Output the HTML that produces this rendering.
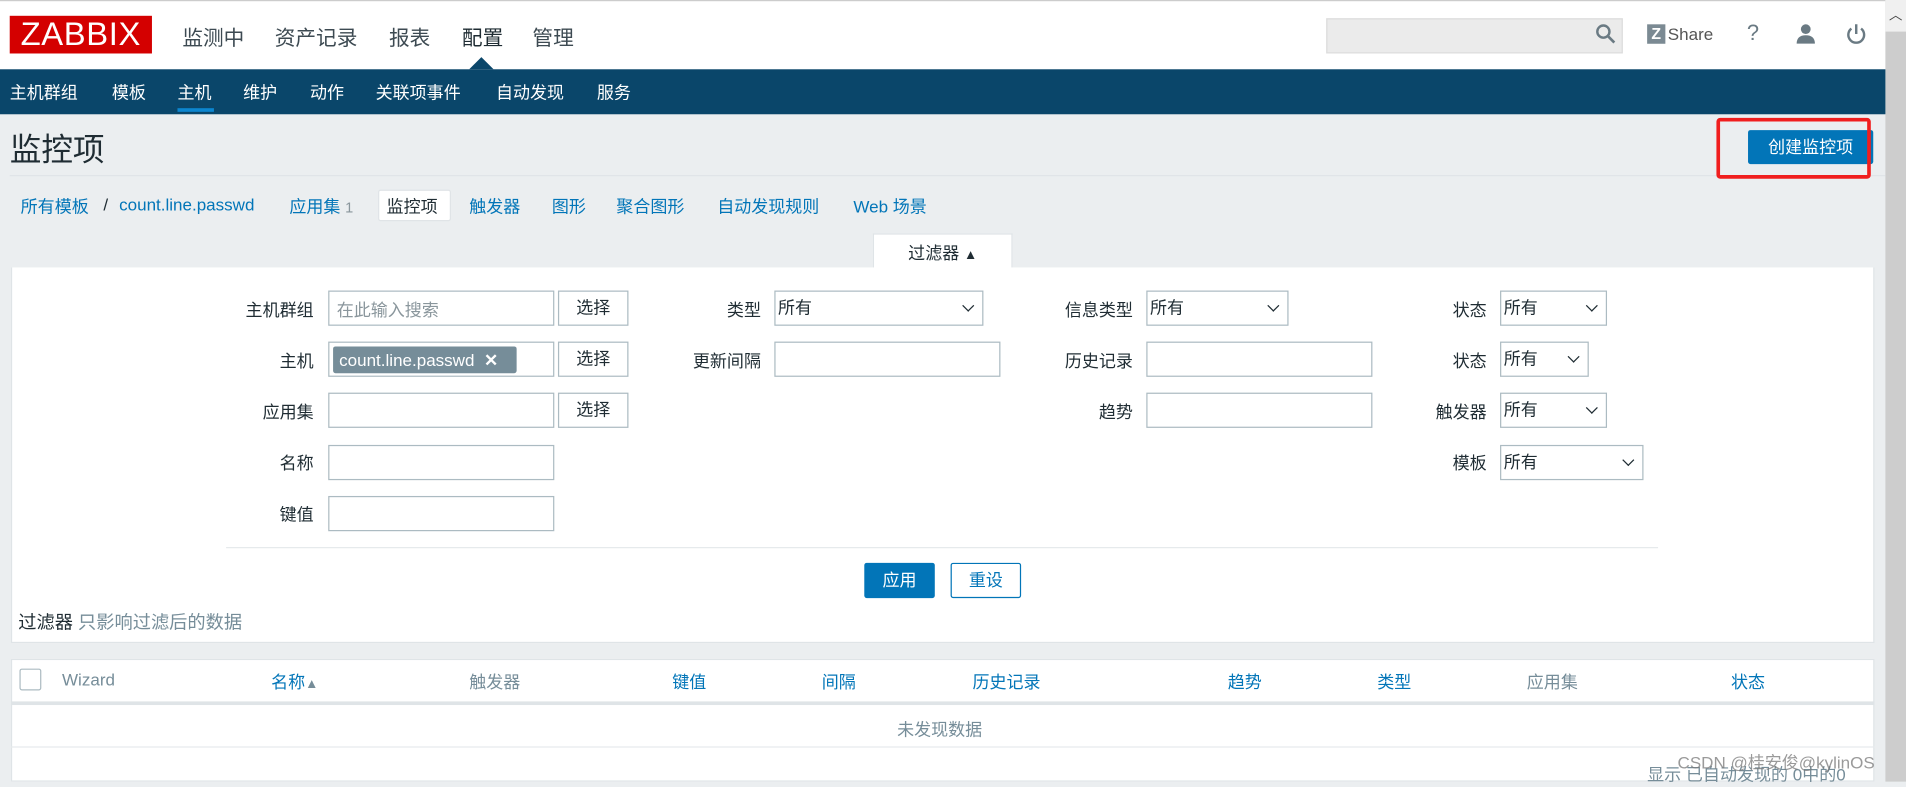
<!DOCTYPE html>
<html><head><meta charset="utf-8"><style>
*{margin:0;padding:0;box-sizing:border-box}
html,body{width:1906px;height:782px;overflow:hidden;background:#ebeef0}
#w{position:absolute;left:0;top:0;width:1568px;height:643px;transform:scale(1.2156);transform-origin:0 0;font-family:"Liberation Sans","Noto Sans CJK SC",sans-serif;font-size:14px;color:#1f2c33;background:#ebeef0}
.a{position:absolute;white-space:nowrap}
.hdr{left:0;top:0;width:1551px;height:57px;background:#fff;border-top:1px solid #ccc}
.nav{left:0;top:57px;width:1551px;height:37px;background:#0a466a}
.nav span{position:absolute;top:9px;color:#fff;font-size:14px}
.menu{top:17px;font-size:17px;color:#3d4a52}
.blue{color:#0275b8}
.inp{position:absolute;height:29px;background:#fff;border:1px solid #acbbc2}
.btn{position:absolute;height:29px;width:58px;background:#fff;border:1px solid #acbbc2;text-align:center;line-height:27px}
.lbl{position:absolute;text-align:right;width:120px}
.sel{position:absolute;height:29px;background:#fff;border:1px solid #acbbc2;padding-left:2px;line-height:27px}
.sel:after{content:"";position:absolute;right:8px;top:8px;width:6px;height:6px;border-right:1.6px solid #1f2c33;border-bottom:1.6px solid #1f2c33;transform:rotate(45deg)}
.th{position:absolute;top:551px}
</style></head><body><div id="w">
<div class="a hdr"></div>
<div class="a" style="left:8px;top:13px;width:117px;height:31px;background:#d40000;color:#fff;font-size:27px;line-height:31px;text-align:center;letter-spacing:0.5px">ZABBIX</div>
<span class="a menu" style="left:150px">监测中</span>
<span class="a menu" style="left:226px">资产记录</span>
<span class="a menu" style="left:320px">报表</span>
<span class="a menu" style="left:380px;color:#1f2c33">配置</span>
<span class="a menu" style="left:438px">管理</span>
<div class="a" style="left:386px;top:47px;width:0;height:0;border-left:10px solid transparent;border-right:10px solid transparent;border-bottom:10px solid #0a466a"></div>
<div class="a" style="left:1091px;top:15px;width:244px;height:29px;background:#ebebeb;border:1px solid #dcdcdc"></div>
<svg class="a" style="left:1312px;top:19px" width="18" height="18" viewBox="0 0 18 18"><circle cx="7" cy="7" r="5" fill="none" stroke="#6a7a83" stroke-width="2"/><line x1="10.5" y1="10.5" x2="16" y2="16" stroke="#6a7a83" stroke-width="2.2"/></svg>
<div class="a" style="left:1355px;top:20px;width:15px;height:16px;background:#7b8a93;color:#fff;font-weight:bold;font-size:13px;line-height:16px;text-align:center">Z</div>
<span class="a" style="left:1372px;top:20px;color:#555;font-size:14px">Share</span>
<span class="a" style="left:1437px;top:17px;color:#6a7a83;font-size:18px">?</span>
<svg class="a" style="left:1477px;top:19px" width="17" height="17" viewBox="0 0 17 17"><circle cx="8.5" cy="5" r="4" fill="#6a7a83"/><path d="M1 17 Q1 10 8.5 10 Q16 10 16 17Z" fill="#6a7a83"/></svg>
<svg class="a" style="left:1518px;top:19px" width="18" height="18" viewBox="0 0 18 18"><path d="M5 4.5 A6.5 6.5 0 1 0 13 4.5" fill="none" stroke="#6a7a83" stroke-width="2"/><line x1="9" y1="1" x2="9" y2="9" stroke="#6a7a83" stroke-width="2"/></svg>
<div class="a" style="left:1551px;top:0;width:17px;height:643px;background:#cdcdcd"></div>
<div class="a" style="left:1551px;top:0;width:17px;height:26px;background:#f0f0f0;font-size:11px;text-align:center;line-height:26px;color:#444">︿</div>
<div class="a nav"><span style="left:8px">主机群组</span><span style="left:92px">模板</span><span style="left:146px">主机</span><span style="left:200px">维护</span><span style="left:255px">动作</span><span style="left:309px">关联项事件</span><span style="left:408px">自动发现</span><span style="left:491px">服务</span>
<div style="position:absolute;left:146px;top:32px;width:30px;height:3px;background:#0c86d0"></div></div>
<span class="a" style="left:8px;top:103px;font-size:26px;color:#1f2c33">监控项</span>
<div class="a" style="left:8px;top:144px;width:1543px;height:1px;background:#dfe4e7"></div>
<div class="a" style="left:1438px;top:107px;width:103px;height:28px;background:#0275b8;color:#fff;text-align:center;line-height:28px;font-size:14px;border-radius:2px">创建监控项</div>
<div class="a" style="left:1412px;top:97px;width:127px;height:50px;border:3px solid #f01e1e;border-radius:3px"></div>
<span class="a blue" style="left:17px;top:160px">所有模板</span><span class="a" style="left:85px;top:160px">/</span>
<span class="a blue" style="left:98px;top:160px">count.line.passwd</span>
<span class="a blue" style="left:238px;top:160px">应用集 <span style="color:#8a969c;font-size:12px">1</span></span>
<div class="a" style="left:311px;top:156px;width:60px;height:26px;background:#fff;border:1px solid #e0e4e7;border-radius:2px"></div>
<span class="a" style="left:318px;top:160px">监控项</span>
<span class="a blue" style="left:386px;top:160px">触发器</span>
<span class="a blue" style="left:454px;top:160px">图形</span>
<span class="a blue" style="left:507px;top:160px">聚合图形</span>
<span class="a blue" style="left:590px;top:160px">自动发现规则</span>
<span class="a blue" style="left:702px;top:160px">Web 场景</span>
<div class="a" style="left:718px;top:192px;width:115px;height:30px;background:#fff;border:1px solid #dfe4e7;border-bottom:none;text-align:center;line-height:30px">过滤器 <span style="font-size:11px">▲</span></div>
<div class="a" style="left:9px;top:220px;width:1533px;height:309px;background:#fff;border:1px solid #dfe4e7;border-top:none"></div>
<div class="lbl" style="left:138px;top:245px">主机群组</div>
<div class="inp" style="left:270px;top:239px;width:186px"><span style="position:absolute;left:6px;top:5px;color:#8a969c">在此输入搜索</span></div>
<div class="btn" style="left:459px;top:239px">选择</div>
<div class="lbl" style="left:138px;top:287px">主机</div>
<div class="inp" style="left:270px;top:281px;width:186px"><div style="position:absolute;left:3px;top:3px;width:151px;height:22px;background:#768d99;border-radius:2px;color:#fff;line-height:22px;padding-left:5px">count.line.passwd <b style="margin-left:4px">✕</b></div></div>
<div class="btn" style="left:459px;top:281px">选择</div>
<div class="lbl" style="left:138px;top:329px">应用集</div>
<div class="inp" style="left:270px;top:323px;width:186px"></div>
<div class="btn" style="left:459px;top:323px">选择</div>
<div class="lbl" style="left:138px;top:371px">名称</div>
<div class="inp" style="left:270px;top:366px;width:186px"></div>
<div class="lbl" style="left:138px;top:413px">键值</div>
<div class="inp" style="left:270px;top:408px;width:186px"></div>
<div class="lbl" style="left:506px;top:245px">类型</div>
<div class="sel" style="left:637px;top:239px;width:172px">所有</div>
<div class="lbl" style="left:506px;top:287px">更新间隔</div>
<div class="inp" style="left:637px;top:281px;width:186px"></div>
<div class="lbl" style="left:812px;top:245px">信息类型</div>
<div class="sel" style="left:943px;top:239px;width:117px">所有</div>
<div class="lbl" style="left:812px;top:287px">历史记录</div>
<div class="inp" style="left:943px;top:281px;width:186px"></div>
<div class="lbl" style="left:812px;top:329px">趋势</div>
<div class="inp" style="left:943px;top:323px;width:186px"></div>
<div class="lbl" style="left:1103px;top:245px">状态</div>
<div class="sel" style="left:1234px;top:239px;width:88px">所有</div>
<div class="lbl" style="left:1103px;top:287px">状态</div>
<div class="sel" style="left:1234px;top:281px;width:73px">所有</div>
<div class="lbl" style="left:1103px;top:329px">触发器</div>
<div class="sel" style="left:1234px;top:323px;width:88px">所有</div>
<div class="lbl" style="left:1103px;top:371px">模板</div>
<div class="sel" style="left:1234px;top:366px;width:118px">所有</div>
<div class="a" style="left:186px;top:450px;width:1178px;height:1px;background:#e6eaec"></div>
<div class="a" style="left:711px;top:463px;width:58px;height:29px;background:#0275b8;color:#fff;text-align:center;line-height:29px;border-radius:2px">应用</div>
<div class="a" style="left:782px;top:463px;width:58px;height:29px;background:#fff;border:1px solid #0275b8;color:#0275b8;text-align:center;line-height:27px;border-radius:2px">重设</div>
<span class="a" style="left:15px;top:501px;font-size:15px">过滤器 <span style="color:#768d99">只影响过滤后的数据</span></span>
<div class="a" style="left:9px;top:542px;width:1533px;height:101px;background:#fff;border:1px solid #dfe4e7"></div>
<div class="a" style="left:9px;top:577px;width:1533px;height:3px;background:#dfe4e7"></div>
<div class="a" style="left:9px;top:614px;width:1533px;height:1px;background:#e6eaec"></div>
<div class="a" style="left:16px;top:550px;width:18px;height:18px;border:1px solid #acbbc2;border-radius:2px"></div>
<span class="th" style="left:51px;color:#768d99">Wizard</span>
<span class="th blue" style="left:223px">名称<span style="color:#768d99;font-size:11px">▲</span></span>
<span class="th" style="left:386px;color:#768d99">触发器</span>
<span class="th blue" style="left:553px">键值</span>
<span class="th blue" style="left:676px">间隔</span>
<span class="th blue" style="left:800px">历史记录</span>
<span class="th blue" style="left:1010px">趋势</span>
<span class="th blue" style="left:1133px">类型</span>
<span class="th" style="left:1256px;color:#768d99">应用集</span>
<span class="th blue" style="left:1424px">状态</span>
<span class="a" style="left:738px;top:590px;color:#768d99">未发现数据</span>
<span class="a" style="left:1355px;top:627px;color:#768d99">显示 已自动发现的 0中的0</span>
<span class="a" style="left:1380px;top:617px;color:rgba(120,120,120,0.75);font-size:14px">CSDN @桂安俊@kylinOS</span>
</div></body></html>
